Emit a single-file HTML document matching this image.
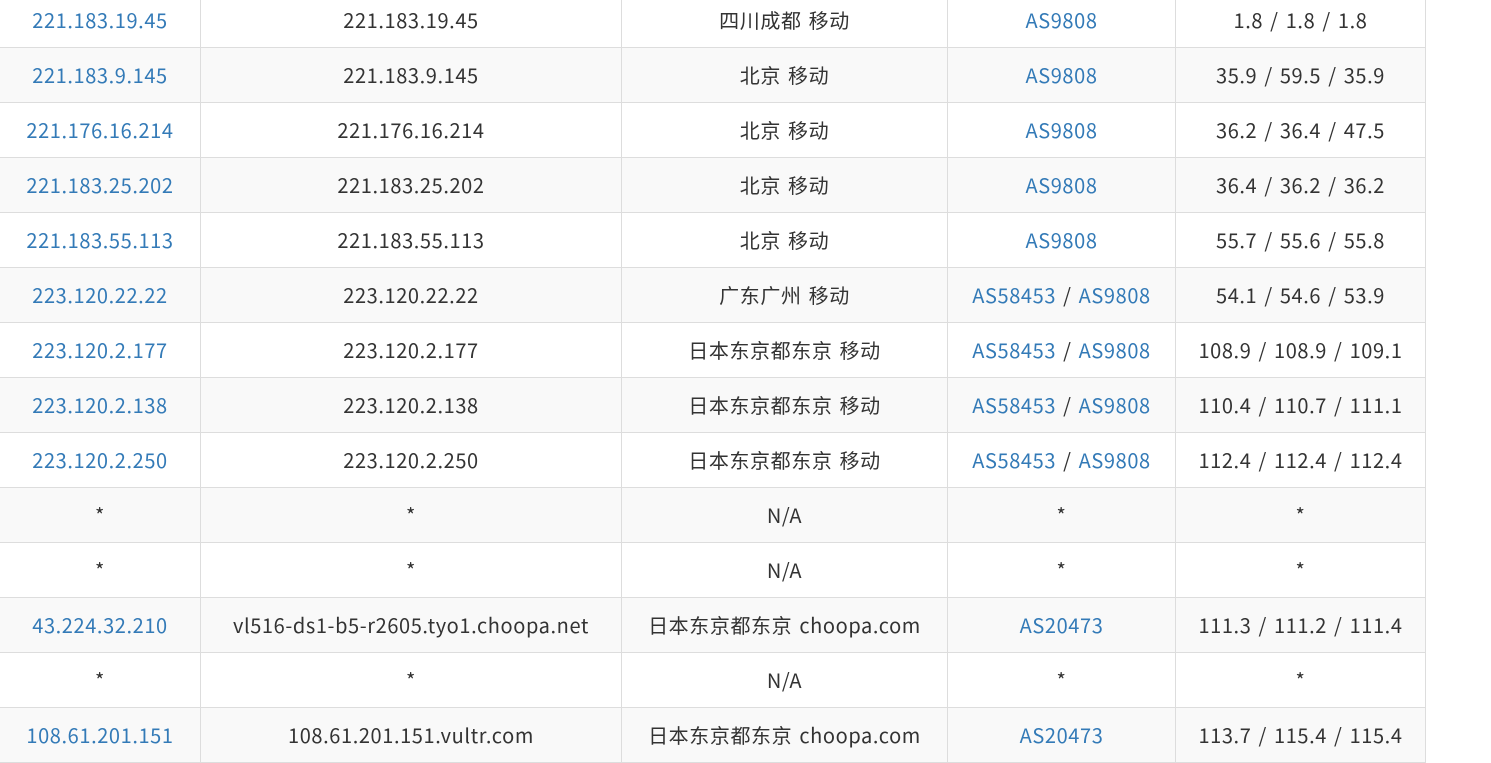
<!DOCTYPE html>
<html><head><meta charset="utf-8"><style>
body{margin:0;background:#fff;width:1491px;height:759px;overflow:hidden;position:relative;font-family:"Noto Sans CJK SC","Liberation Sans",sans-serif;font-size:20px;color:#333}
table{position:absolute;left:-1px;top:-8px;border-collapse:collapse;table-layout:fixed;width:1427px}
td{border:1px solid #ddd;height:54px;padding:0;text-align:center;vertical-align:middle;white-space:nowrap;line-height:24px;letter-spacing:0.6px;word-spacing:2px}
tr:nth-child(even) td{background:#f9f9f9}
a{color:#337ab7;text-decoration:none}
</style></head><body>
<table>
<colgroup><col style="width:201px"><col style="width:421px"><col style="width:326px"><col style="width:228px"><col style="width:250px"></colgroup>
<tr><td><a>221.183.19.45</a></td><td>221.183.19.45</td><td>四川成都 移动</td><td><a>AS9808</a></td><td>1.8 / 1.8 / 1.8</td></tr>
<tr><td><a>221.183.9.145</a></td><td>221.183.9.145</td><td>北京 移动</td><td><a>AS9808</a></td><td>35.9 / 59.5 / 35.9</td></tr>
<tr><td><a>221.176.16.214</a></td><td>221.176.16.214</td><td>北京 移动</td><td><a>AS9808</a></td><td>36.2 / 36.4 / 47.5</td></tr>
<tr><td><a>221.183.25.202</a></td><td>221.183.25.202</td><td>北京 移动</td><td><a>AS9808</a></td><td>36.4 / 36.2 / 36.2</td></tr>
<tr><td><a>221.183.55.113</a></td><td>221.183.55.113</td><td>北京 移动</td><td><a>AS9808</a></td><td>55.7 / 55.6 / 55.8</td></tr>
<tr><td><a>223.120.22.22</a></td><td>223.120.22.22</td><td>广东广州 移动</td><td><a>AS58453</a> / <a>AS9808</a></td><td>54.1 / 54.6 / 53.9</td></tr>
<tr><td><a>223.120.2.177</a></td><td>223.120.2.177</td><td>日本东京都东京 移动</td><td><a>AS58453</a> / <a>AS9808</a></td><td>108.9 / 108.9 / 109.1</td></tr>
<tr><td><a>223.120.2.138</a></td><td>223.120.2.138</td><td>日本东京都东京 移动</td><td><a>AS58453</a> / <a>AS9808</a></td><td>110.4 / 110.7 / 111.1</td></tr>
<tr><td><a>223.120.2.250</a></td><td>223.120.2.250</td><td>日本东京都东京 移动</td><td><a>AS58453</a> / <a>AS9808</a></td><td>112.4 / 112.4 / 112.4</td></tr>
<tr><td>*</td><td>*</td><td>N/A</td><td>*</td><td>*</td></tr>
<tr><td>*</td><td>*</td><td>N/A</td><td>*</td><td>*</td></tr>
<tr><td><a>43.224.32.210</a></td><td>vl516-ds1-b5-r2605.tyo1.choopa.net</td><td>日本东京都东京 choopa.com</td><td><a>AS20473</a></td><td>111.3 / 111.2 / 111.4</td></tr>
<tr><td>*</td><td>*</td><td>N/A</td><td>*</td><td>*</td></tr>
<tr><td><a>108.61.201.151</a></td><td>108.61.201.151.vultr.com</td><td>日本东京都东京 choopa.com</td><td><a>AS20473</a></td><td>113.7 / 115.4 / 115.4</td></tr>
</table>
</body></html>
